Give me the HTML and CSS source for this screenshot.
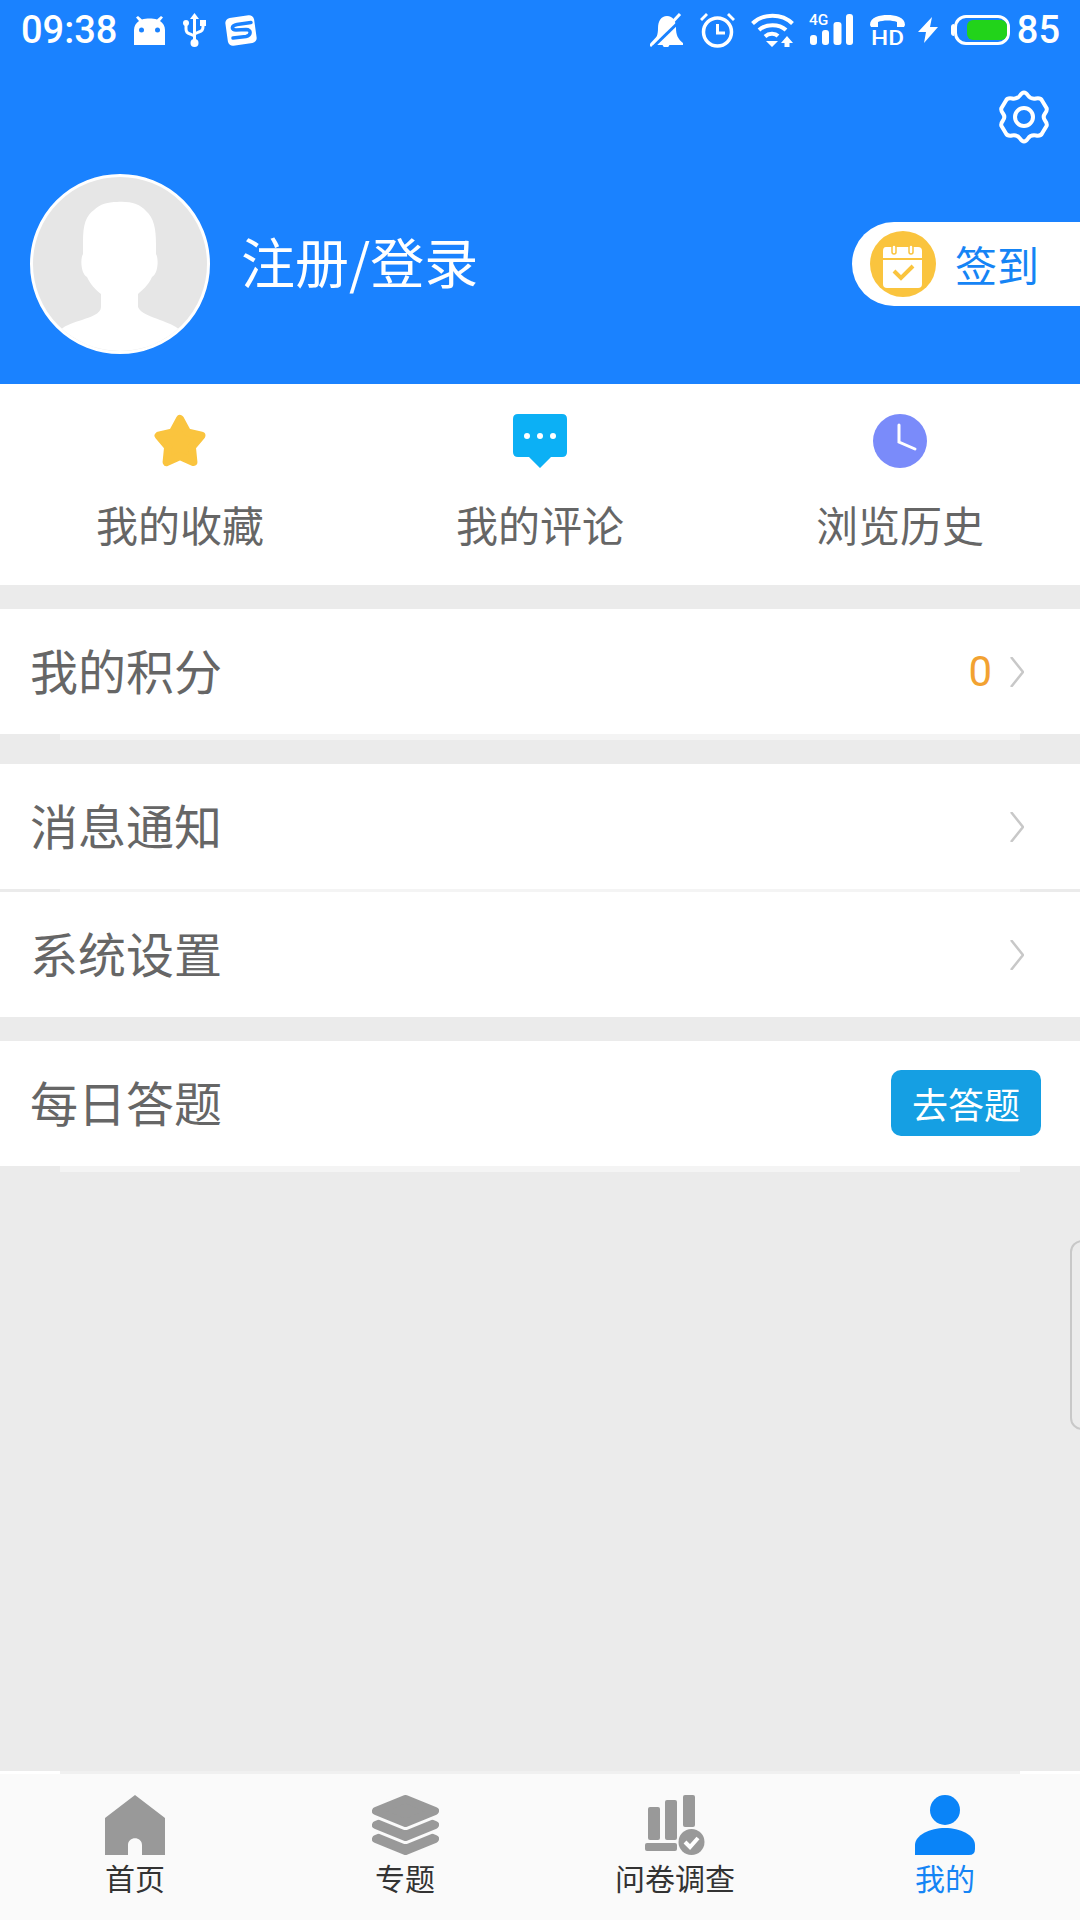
FILE: index.html
```html
<!DOCTYPE html>
<html lang="zh-CN">
<head>
    <meta charset="UTF-8">
    <meta name="viewport" content="width=device-width, initial-scale=1.0">
    <title>我的</title>
    <link rel="stylesheet" href="styles.css">
</head>
<body>
    <div class="page">
        <header class="header">
            <div class="status-bar">
                <div class="status-left">
                    <span class="status-time">09:38</span>
                    <svg class="icon-android" viewBox="0 0 31 29">
                        <path fill="#fff" d="M0 29V14C0 10 2 7 5 5L2 1.500 4 0 8 3.500C10 2.800 13 2.500 15.500 2.500S21 2.800 23 3.500L27 0 29 1.500 26 5C29 7 31 10 31 14V29Z"/>
                        <circle cx="7.500" cy="14" r="2.500" fill="#1a82ff"/>
                        <circle cx="23.500" cy="14" r="2.500" fill="#1a82ff"/>
                    </svg>
                    <svg class="icon-usb" viewBox="0 0 23 34">
                        <path fill="none" stroke="#fff" stroke-width="3" d="M11.500 4V29M3 11V16Q3 20 7 21L11.500 23M20 11V14Q20 18 16 19L11.500 21"/>
                        <path fill="#fff" d="M11.500 0 16 6H7Z"/>
                        <circle cx="3" cy="10" r="3" fill="#fff"/>
                        <rect x="17" y="7" width="6" height="6" fill="#fff"/>
                        <circle cx="11.500" cy="30" r="4" fill="#fff"/>
                    </svg>
                    <svg class="icon-sogou" viewBox="0 0 34 33">
                        <rect x="2.500" y="2.500" width="29" height="28" rx="5" fill="#fff" transform="rotate(-8 17 16.500)"/>
                        <path fill="none" stroke="#1a82ff" stroke-width="3.500" stroke-linecap="round" d="M27 8.500 13 10.500C7 11.500 7 16 12 16L22 15.500C28 15.500 27 21.500 22 22.500L9 24"/>
                    </svg>
                </div>
                <div class="status-right">
                    <svg class="icon-bell" viewBox="0 0 34 34">
                        <path fill="#fff" d="M2 30C7 26 8 21 8 15 8 8 11 3 17 3S26 8 26 15C26 22 28 26 33 30V32H2Z"/>
                        <circle cx="16" cy="31" r="3.500" fill="#fff"/>
                        <path fill="none" stroke="#1a82ff" stroke-width="3" d="M2 35 34 4"/>
                        <path fill="none" stroke="#fff" stroke-width="3" d="M0 33 30 1"/>
                    </svg>
                    <svg class="icon-alarm" viewBox="0 0 35 35">
                        <circle cx="17.500" cy="19" r="14" fill="none" stroke="#fff" stroke-width="3.500"/>
                        <path fill="none" stroke="#fff" stroke-width="3" d="M17.500 11V20H25"/>
                        <path fill="#fff" d="M0 6 6 0 8 2 2 8ZM35 6 29 0 27 2 33 8Z"/>
                    </svg>
                    <svg class="icon-wifi" viewBox="0 0 43 34">
                        <g fill="none" stroke="#fff" stroke-width="4">
                            <path d="M1.500 10.500C12 0 31 0 41.500 10.500"/>
                            <path d="M8 17C15 10.500 28 10.500 35 17"/>
                            <path d="M14 23.500C18 20 24 20 27 23"/>
                        </g>
                        <path fill="#fff" d="M15 28H27L21 34ZM36 23 42 30H38.500V34H33.500V30H30Z"/>
                    </svg>
                    <svg class="icon-signal" viewBox="0 -6 45 44">
                        <text class="net-type" x="0" y="11">4G</text>
                        <g fill="#fff">
                            <rect x="1" y="21" width="7" height="10" rx="3"/>
                            <rect x="13" y="16" width="7" height="15" rx="3"/>
                            <rect x="24.500" y="8" width="8" height="23" rx="3"/>
                            <rect x="37" y="0" width="7" height="31" rx="3"/>
                        </g>
                    </svg>
                    <svg class="icon-hd" viewBox="0 -6 35 44">
                        <path fill="#fff" d="M0 11C0 3 10 1 17.500 1S35 3 35 11L34 13H27V8C22 6 13 6 8 8V13H1Z"/>
                        <text class="hd-text" x="1" y="31" textLength="33" lengthAdjust="spacingAndGlyphs">HD</text>
                    </svg>
                    <svg class="icon-bolt" viewBox="0 0 20 26">
                        <path fill="#fff" d="M14 0 0 15H8L6 26 20 10H12Z"/>
                    </svg>
                    <div class="battery">
                        <div class="battery-fill"></div>
                    </div>
                    <span class="status-level">85</span>
                </div>
            </div>
            <div class="gear-row">
                <svg class="icon-gear" viewBox="0 0 52 54">
                    <path fill="none" stroke="#fff" stroke-width="4" stroke-linejoin="round" d="M26 2.500C28 2.500 29 4 30 5.500 32 8.500 35 9 38 8.500 41 8 43 8.500 44 10.500L48.500 18C49.500 20 48.500 21.500 47 23.500 45.500 25.500 45.500 28.500 47 30.500 48.500 32.500 49.500 34 48.500 36L44 43.500C43 45.500 41 46 38 45.500 35 45 32 45.500 30 48.500 29 50 28 51.500 26 51.500S23 50 22 48.500C20 45.500 17 45 14 45.500 11 46 9 45.500 8 43.500L3.500 36C2.500 34 3.500 32.500 5 30.500 6.500 28.500 6.500 25.500 5 23.500 3.500 21.500 2.500 20 3.500 18L8 10.500C9 8.500 11 8 14 8.500 17 9 20 8.500 22 5.500 23 4 24 2.500 26 2.500Z"/>
                    <circle cx="26" cy="27" r="9" fill="none" stroke="#fff" stroke-width="4"/>
                </svg>
            </div>
            <div class="profile">
                <div class="avatar">
                    <svg viewBox="0 0 174 174">
                        <path fill="#fff" d="M84 25C97 24 107 27 113 34 121 41 123 52 123 67V77C126 82 125 97 119 100 115 109 109 113 105 117V130C107 136 117 139 127 143 135 146 141 148 147 153V174H27V153C33 148 41 145 49 143 57 140 68 137 68 130V117C63 113 57 107 54 100 48 97 47 82 50 77V65C50 47 53 39 61 33 67 27 75 25 84 25Z"/>
                    </svg>
                </div>
                <div class="login-link">注册/登录</div>
                <div class="checkin">
                    <svg class="icon-checkin" viewBox="0 0 66 66">
                        <circle cx="33" cy="33" r="33" fill="#fac43e"/>
                        <path fill="#fff" d="M16 16H48Q52 16 52 20V53Q52 57 48 57H17Q13 57 13 53V20Q13 16 16 16Z"/>
                        <path fill="none" stroke="#fac43e" stroke-width="2" d="M13 28H52"/>
                        <path fill="none" stroke="#fac43e" stroke-width="4" d="M24 40 31 47 43 35"/>
                        <g fill="#fff" stroke="#fac43e" stroke-width="1.500">
                            <rect x="22" y="14" width="4" height="9" rx="2"/>
                            <rect x="39" y="14" width="4" height="9" rx="2"/>
                        </g>
                    </svg>
                    <span class="checkin-text">签到</span>
                </div>
            </div>
        </header>

        <section class="shortcuts">
            <div class="shortcut">
                <svg class="shortcut-icon" viewBox="0 0 54 54">
                    <polygon fill="#fac43e" stroke="#fac43e" stroke-width="8" stroke-linejoin="round" points="27,5 34.300,18.400 48.400,21.700 38.900,32.900 40.400,48 27,42 13.600,48 15.100,32.900 5.600,21.700 19.700,18.400"/>
                </svg>
                <span>我的收藏</span>
            </div>
            <div class="shortcut">
                <svg class="shortcut-icon" viewBox="0 0 54 54">
                    <path fill="#0cb0f5" d="M5 0H49Q54 0 54 5V38Q54 43 49 43H38L27 54 16 43H5Q0 43 0 38V5Q0 0 5 0Z"/>
                    <circle cx="14" cy="22" r="3" fill="#fff"/>
                    <circle cx="27" cy="22" r="3" fill="#fff"/>
                    <circle cx="40" cy="22" r="3" fill="#fff"/>
                </svg>
                <span>我的评论</span>
            </div>
            <div class="shortcut">
                <svg class="shortcut-icon" viewBox="0 0 54 54">
                    <circle cx="27" cy="27" r="27" fill="#7a8bfa"/>
                    <path fill="none" stroke="#fff" stroke-width="3" stroke-linecap="round" d="M26 11V28L42 35"/>
                </svg>
                <span>浏览历史</span>
            </div>
        </section>

        <div class="row row-group">
            <span class="row-title">我的积分</span>
            <span class="row-value">0</span>
            <svg class="chevron" viewBox="0 0 14 30"><path d="M1 0 13 15 1 30"/></svg>
        </div>
        <div class="divider"></div>

        <div class="row row-group">
            <span class="row-title">消息通知</span>
            <svg class="chevron" viewBox="0 0 14 30"><path d="M1 0 13 15 1 30"/></svg>
        </div>
        <div class="divider divider-thin"></div>
        <div class="row">
            <span class="row-title">系统设置</span>
            <svg class="chevron" viewBox="0 0 14 30"><path d="M1 0 13 15 1 30"/></svg>
        </div>

        <div class="row row-group">
            <span class="row-title">每日答题</span>
            <button class="answer-btn">去答题</button>
        </div>
        <div class="divider"></div>

        <div class="filler"></div>

        <div class="side-handle"></div>

        <nav class="tabbar">
            <div class="tabbar-line"><div class="tabbar-line-inner"></div></div>
            <div class="tabs">
                <div class="tab">
                    <svg class="tab-icon" viewBox="0 0 60 60">
                        <path fill="#999" d="M30 0 60 23V60H37V50C37 41 23 41 23 50V60H0V23Z"/>
                    </svg>
                    <span>首页</span>
                </div>
                <div class="tab">
                    <svg class="tab-icon tab-icon-wide" viewBox="0 0 67 60">
                        <g stroke-linejoin="round">
                            <polygon fill="#999" stroke="#999" stroke-width="8" points="4,44 33.500,32 63,44 33.500,56"/>
                            <polygon fill="#999" stroke="#fafafa" stroke-width="14" points="4,30 33.500,18 63,30 33.500,42"/>
                            <polygon fill="#999" stroke="#999" stroke-width="8" points="4,30 33.500,18 63,30 33.500,42"/>
                            <polygon fill="#999" stroke="#fafafa" stroke-width="14" points="4,16 33.500,4 63,16 33.500,28"/>
                            <polygon fill="#999" stroke="#999" stroke-width="8" points="4,16 33.500,4 63,16 33.500,28"/>
                        </g>
                    </svg>
                    <span>专题</span>
                </div>
                <div class="tab">
                    <svg class="tab-icon" viewBox="0 0 60 60">
                        <g fill="#999">
                            <rect x="3" y="12" width="12" height="33" rx="2"/>
                            <rect x="20" y="5" width="12" height="40" rx="2"/>
                            <rect x="38" y="0" width="12" height="32" rx="2"/>
                            <rect x="0" y="48" width="32" height="8" rx="2"/>
                            <circle cx="46.500" cy="47" r="13"/>
                        </g>
                        <path fill="none" stroke="#fff" stroke-width="4" d="M40 47 45 52 53 43"/>
                    </svg>
                    <span>问卷调查</span>
                </div>
                <div class="tab tab-active">
                    <svg class="tab-icon" viewBox="0 0 60 60">
                        <circle cx="30" cy="15" r="15" fill="#0a84f8"/>
                        <path fill="#0a84f8" d="M0 60V50C0 40 15 33 30 33S60 40 60 50V54Q60 60 54 60Z"/>
                    </svg>
                    <span>我的</span>
                </div>
            </div>
        </nav>
    </div>
</body>
</html>
```

FILE: styles.css
```css
body {
    margin: 0;
    padding: 0;
    font-family: "Noto Sans CJK SC", "Liberation Sans", sans-serif;
    background-color: #ebebeb;
}

.page {
    position: relative;
    display: flex;
    flex-direction: column;
    width: 1080px;
    height: 1920px;
    overflow: hidden;
}

/* header */
.header {
    height: 384px;
    flex-shrink: 0;
    background-color: #1a82ff;
    color: #fff;
}

.status-bar {
    display: flex;
    justify-content: space-between;
    align-items: center;
    height: 60px;
    padding: 0 20px 0 21px;
}

.status-left, .status-right {
    display: flex;
    align-items: center;
}

.status-time, .status-level {
    font-family: Roboto, sans-serif;
    font-size: 38px;
    font-weight: 500;
    line-height: 60px;
}

.icon-android {
    width: 31px;
    height: 29px;
    margin-left: 17px;
}

.icon-usb {
    width: 23px;
    height: 34px;
    margin-left: 18px;
}

.icon-sogou {
    width: 34px;
    height: 33px;
    margin-left: 18px;
}

.icon-bell {
    width: 34px;
    height: 34px;
}

.icon-alarm {
    width: 35px;
    height: 35px;
    margin-left: 16px;
}

.icon-wifi {
    width: 43px;
    height: 34px;
    margin-left: 16px;
}

.icon-signal {
    width: 45px;
    height: 44px;
    margin-left: 15px;
}

.net-type {
    font-family: Roboto, sans-serif;
    font-size: 15.5px;
    font-weight: 500;
    fill: #fff;
}

.icon-hd {
    width: 35px;
    height: 44px;
    margin-left: 16px;
}

.hd-text {
    font-family: Roboto, sans-serif;
    font-size: 20px;
    font-weight: 500;
    fill: #fff;
}

.icon-bolt {
    width: 20px;
    height: 26px;
    margin-left: 13px;
}

.battery {
    position: relative;
    display: flex;
    align-items: center;
    justify-content: flex-end;
    width: 50px;
    height: 24px;
    margin-left: 16px;
    border: 3px solid #fff;
    border-radius: 12px;
}

/* battery terminal on the left side */
.battery::before {
    content: "";
    position: absolute;
    left: -6px;
    top: 6px;
    width: 3px;
    height: 12px;
    border-radius: 3px 0 0 3px;
    background-color: #fff;
}

.battery-fill {
    width: 40px;
    height: 20px;
    border-radius: 6px;
    background-color: #22d31a;
}

.status-level {
    margin-left: 7px;
}

.gear-row {
    display: flex;
    justify-content: flex-end;
    padding: 30px 30px 0 0;
}

.icon-gear {
    width: 52px;
    height: 54px;
}

.profile {
    display: flex;
    align-items: center;
    margin-top: 30px;
    padding-left: 30px;
}

.avatar {
    width: 174px;
    height: 174px;
    border: 3px solid #fff;
    border-radius: 50%;
    overflow: hidden;
    background-color: #e6e6e6;
}

.avatar svg {
    display: block;
    width: 174px;
    height: 174px;
}

.login-link {
    flex: 1;
    margin: 0 0 6px 31px;
    font-size: 54px;
    line-height: 74px;
}

.checkin {
    display: flex;
    align-items: center;
    width: 210px;
    height: 84px;
    padding-left: 18px;
    border-radius: 42px 0 0 42px;
    background-color: #fff;
}

.icon-checkin {
    width: 66px;
    height: 66px;
}

.checkin-text {
    margin: 0 0 2px 19px;
    font-size: 42px;
    color: #1584f5;
}

/* three shortcuts under the header */
.shortcuts {
    display: grid;
    grid-template-columns: repeat(3, 1fr);
    flex-shrink: 0;
    height: 201px;
    background-color: #fff;
}

.shortcut {
    display: flex;
    flex-direction: column;
    align-items: center;
    padding-top: 30px;
    font-size: 42px;
    line-height: 60px;
    color: #666;
}

.shortcut-icon {
    width: 54px;
    height: 54px;
    margin-bottom: 26px;
}

/* list rows */
.row {
    display: flex;
    align-items: center;
    flex-shrink: 0;
    height: 125px;
    padding: 0 56px 0 30px;
    background-color: #fff;
}

.row-group {
    margin-top: 24px;
}

.row-title {
    flex: 1;
    margin-bottom: 5px;
    font-size: 48px;
    color: #666;
}

.row-value {
    margin-right: 18px;
    font-family: Roboto, sans-serif;
    font-size: 42px;
    color: #f2a231;
}

.chevron {
    width: 14px;
    height: 30px;
}

.chevron path {
    fill: none;
    stroke: #c8c8c8;
    stroke-width: 2.5;
}

.divider {
    flex-shrink: 0;
    height: 6px;
    margin: 0 60px;
    background-color: #f4f4f4;
}

.divider-thin {
    height: 3px;
}

.answer-btn {
    width: 150px;
    height: 66px;
    margin: 0 -17px 1px 0;
    padding: 0;
    border: none;
    border-radius: 10px;
    font-family: inherit;
    font-size: 36px;
    color: #fff;
    background-color: #159fe3;
}

.filler {
    flex: 1;
}

/* floating handle on the right edge */
.side-handle {
    position: absolute;
    top: 1240px;
    right: -14px;
    width: 20px;
    height: 186px;
    border: 2px solid #c8c8c8;
    border-radius: 12px;
}

/* bottom navigation */
.tabbar {
    flex-shrink: 0;
    height: 149px;
    background-color: #fafafa;
}

.tabbar-line {
    height: 3px;
    background-color: #fff;
}

.tabbar-line-inner {
    height: 3px;
    margin: 0 60px;
    background-color: #f0f0f0;
}

.tabs {
    display: grid;
    grid-template-columns: repeat(4, 1fr);
    padding-top: 21px;
}

.tab {
    display: flex;
    flex-direction: column;
    align-items: center;
    font-size: 30px;
    line-height: 44px;
    color: #333;
}

.tab-icon {
    width: 60px;
    height: 60px;
}

.tab-icon-wide {
    width: 67px;
}

.tab-active {
    color: #1584f5;
}
```
